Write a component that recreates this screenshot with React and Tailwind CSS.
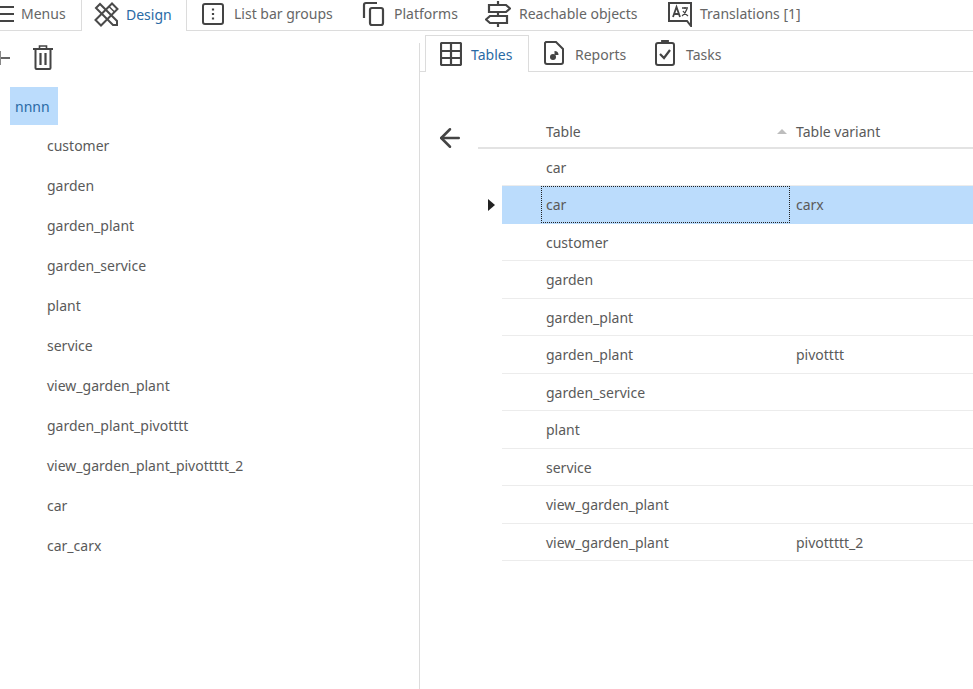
import { ArrowLeft } from "lucide-react";

const FONT = "font-['Noto_Sans','Open_Sans',sans-serif]";

const treeItems = [
  "customer",
  "garden",
  "garden_plant",
  "garden_service",
  "plant",
  "service",
  "view_garden_plant",
  "garden_plant_pivotttt",
  "view_garden_plant_pivottttt_2",
  "car",
  "car_carx",
];

const rows = [
  ["car", ""],
  ["car", "carx"],
  ["customer", ""],
  ["garden", ""],
  ["garden_plant", ""],
  ["garden_plant", "pivotttt"],
  ["garden_service", ""],
  ["plant", ""],
  ["service", ""],
  ["view_garden_plant", ""],
  ["view_garden_plant", "pivottttt_2"],
];

function MenuBars() {
  return (
    <svg width="14" height="18" viewBox="0 0 14 18" fill="none" stroke="#444" strokeWidth="2">
      <path d="M0 2 H14 M0 9 H14 M0 16 H14" />
    </svg>
  );
}

function DesignIcon() {
  return (
    <svg width="25" height="25" viewBox="0 0 25 25" fill="none" stroke="#4a4a4a" strokeWidth="2">
      <path d="M2 6 L6 2 L23 19 V23 H19 Z" />
      <path d="M1.5 18 L18 1.5 L23.5 7 L7 23.5 Z" />
      <path d="M15 4.5 L20.5 10" strokeWidth="1.4" />
    </svg>
  );
}

function DotsIcon() {
  return (
    <svg width="24" height="24" viewBox="0 0 24 24" fill="none" stroke="#444" strokeWidth="2">
      <rect x="2" y="2" width="20" height="20" rx="2" />
      <path d="M12 6.5v2M12 11v2M12 15.5v2" strokeWidth="2.2" />
    </svg>
  );
}

function PlatformIcon() {
  return (
    <svg width="24" height="26" viewBox="0 0 24 26" fill="none" stroke="#444" strokeWidth="2.2">
      <path d="M15 2 H4 Q2 2 2 4 V17" />
      <rect x="8" y="7" width="13" height="17" rx="2" />
    </svg>
  );
}

function SignpostIcon() {
  return (
    <svg width="26" height="26" viewBox="0 0 26 26" fill="none" stroke="#444" strokeWidth="2.2">
      <path d="M13 0 V3 M13 11 V15 M13 22 V26" />
      <path d="M4 4 H21 L25 7.5 L21 11 H4 Z" />
      <path d="M22 15 H5 L1 18.5 L5 22 H22 Z" />
    </svg>
  );
}

function TranslateIcon() {
  return (
    <svg width="26" height="26" viewBox="0 0 26 26" fill="none" stroke="#444" strokeWidth="2">
      <path d="M2 2 H24 V25 L20 20 H2 Z" />
      <path d="M6 16 L9.5 6 L13 16 M7 13 H12" strokeWidth="1.8" />
      <path d="M15 7 H21 M18 6 V8 M20 8 Q18 13 15 15 M16 10 Q18 13 21 15" strokeWidth="1.3" />
    </svg>
  );
}

function TrashIcon() {
  return (
    <svg width="20" height="25" viewBox="0 0 20 25" fill="none" stroke="#444" strokeWidth="2">
      <path d="M0 4 H20" />
      <path d="M6.5 4 V1 H13.5 V4" strokeWidth="1.6" />
      <path d="M2.5 4 V23 Q2.5 24 3.5 24 H16.5 Q17.5 24 17.5 23 V4" />
      <path d="M7.5 8 V20 M12.5 8 V20" strokeWidth="2.2" />
    </svg>
  );
}

function TableIcon() {
  return (
    <svg width="22" height="24" viewBox="0 0 22 24" fill="none" stroke="#444" strokeWidth="2.2">
      <rect x="1" y="1" width="20" height="22" rx="1" />
      <path d="M1 9 H21 M1 16 H21 M11 1 V23" />
    </svg>
  );
}

function ReportIcon() {
  return (
    <svg width="20" height="24" viewBox="0 0 20 24" fill="none" stroke="#444" strokeWidth="2">
      <path d="M2 1 H12 L19 8 V21 Q19 23 17 23 H3 Q1 23 1 21 V2 Z" />
      <circle cx="9" cy="16" r="3" fill="#444" stroke="none" />
      <path d="M10.5 10 A4 4 0 0 1 14.5 14 H10.5 Z" fill="#444" stroke="none" />
    </svg>
  );
}

function TaskIcon() {
  return (
    <svg width="20" height="26" viewBox="0 0 20 26" fill="none" stroke="#444" strokeWidth="2">
      <rect x="1" y="3" width="18" height="22" rx="2" />
      <path d="M7 3 V1 H13 V3" strokeWidth="1.8" />
      <path d="M5 14 L9 18 L15 10" strokeWidth="2.2" />
    </svg>
  );
}

function TopTab({ icon, label, active, className = "" }) {
  return (
    <div
      className={`flex items-center shrink-0 pb-[2px] ${
        active ? "bg-white border-x border-[#dcdcdc] h-[31px] -mb-px" : "h-[30px]"
      } ${className}`}
    >
      {icon}
      <span className={`text-[14px] leading-[26px] ${active ? "text-[#2a6aa5]" : "text-[#666]"}`}>{label}</span>
    </div>
  );
}

export default function App() {
  return (
    <div className={`w-[973px] h-[689px] overflow-hidden bg-white flex flex-col ${FONT}`}>
      {/* Top tabs */}
      <div className="h-[31px] shrink-0 flex items-start border-b border-[#dcdcdc]">
        <TopTab className="w-[81px] gap-[7px]" icon={<MenuBars />} label="Menus" />
        <TopTab active className="w-[106px] gap-[7px] pl-[12px]" icon={<DesignIcon />} label="Design" />
        <TopTab className="w-[175px] gap-[9px] pl-[14px]" icon={<DotsIcon />} label="List bar groups" />
        <TopTab className="w-[123px] gap-[8px]" icon={<PlatformIcon />} label="Platforms" />
        <TopTab className="w-[182px] gap-[8px]" icon={<SignpostIcon />} label="Reachable objects" />
        <TopTab className="gap-[7px]" icon={<TranslateIcon />} label="Translations [1]" />
      </div>

      <div className="flex-1 flex min-h-0">
        {/* Left tree */}
        <div className="w-[420px] shrink-0 border-r border-[#dcdcdc] mt-[12px]">
          <div className="h-[44px] relative -mt-[12px] flex items-start pl-[33px] pt-[14px]">
            <div className="absolute left-0 top-[26px] w-[10px] h-[2px] bg-[#666]" />
            <div className="absolute left-0 top-[20px] w-[1px] h-[14px] bg-[#888]" />
            <TrashIcon />
          </div>
          <div className="pl-[10px] pt-[12px]">
            <div className="w-[48px] h-[38px] bg-[#bbdcfc] flex items-center pl-[5px] text-[14px] text-[#2a6aa5]">
              nnnn
            </div>
            <div className="pl-[37px] pt-[1px]">
              {treeItems.map((name) => (
                <div key={name} className="h-[40px] flex items-center text-[14px] text-[#5a5a5a] pb-[1px]">
                  {name}
                </div>
              ))}
            </div>
          </div>
        </div>

        {/* Right pane */}
        <div className="flex-1 min-w-0 flex flex-col">
          <div className="h-[41px] shrink-0 flex items-end border-b border-[#dcdcdc] pl-[5px]">
            <div className="w-[104px] h-[37px] -mb-px bg-white border border-b-0 border-[#dcdcdc] flex items-center gap-[10px] pl-[14px]">
              <TableIcon />
              <span className="text-[14px] text-[#2a6aa5] mt-[1px] -ml-[1px]">Tables</span>
            </div>
            <div className="w-[112px] h-[36px] flex items-center gap-[11px] pl-[15px]">
              <ReportIcon />
              <span className="text-[14px] text-[#666] mt-[2px]">Reports</span>
            </div>
            <div className="h-[36px] flex items-center gap-[11px] pl-[14px]">
              <TaskIcon />
              <span className="text-[14px] text-[#666] mt-[2px]">Tasks</span>
            </div>
          </div>

          <div className="flex pt-[43px]">
            <div className="w-[58px] shrink-0 pl-[15px] pt-[8px]">
              <ArrowLeft size={30} strokeWidth={2} color="#444" />
            </div>
            <div className="flex-1 min-w-0">
              <div className="h-[33.5px] flex items-center border-b-2 border-[#e3e3e3] text-[14px] text-[#5a5a5a] pt-[1px]">
                <div className="w-[68px] shrink-0" />
                <div className="w-[231px] shrink-0">Table</div>
                <div className="w-[19px] shrink-0 flex items-center">
                  <div className="w-0 h-0 border-x-[5px] border-x-transparent border-b-[5px] border-b-[#bdbdbd]" />
                </div>
                <div>Table variant</div>
              </div>
              {rows.map(([table, variant], i) => {
                const selected = i === 1;
                return (
                  <div key={i} className="flex h-[37.5px] items-stretch text-[14px] text-[#5a5a5a]">
                    <div className="w-[24px] shrink-0 flex items-center justify-start pl-[10px]">
                      {selected && (
                        <div className="w-0 h-0 border-y-[6px] border-y-transparent border-l-[7px] border-l-[#222]" />
                      )}
                    </div>
                    <div
                      className={`flex-1 min-w-0 flex items-stretch border-b ${
                        selected ? "bg-[#bbdcfc] border-[#bbdcfc]" : "border-[#ececec]"
                      }`}
                    >
                      <div className="w-[44px] shrink-0" />
                      <div
                        className={`shrink-0 flex items-center pt-[1px] ${
                          selected
                            ? "border border-dotted border-[#222] -ml-[5px] pl-[4px] w-[249px]"
                            : "w-[244px]"
                        }`}
                      >
                        {table}
                      </div>
                      <div className="flex items-center pl-[6px] pt-[1px]">{variant}</div>
                    </div>
                  </div>
                );
              })}
            </div>
          </div>
        </div>
      </div>
    </div>
  );
}
